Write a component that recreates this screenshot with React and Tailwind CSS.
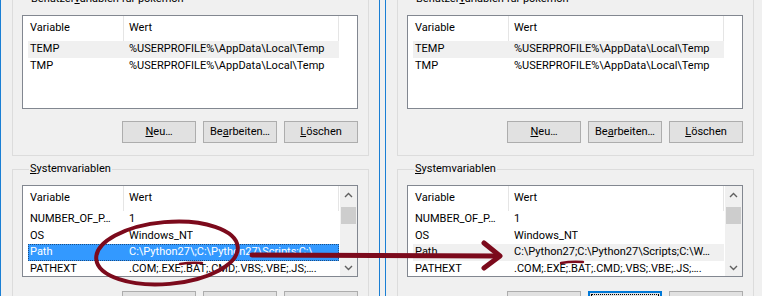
import React from "react";

const userRows = [
  { name: "TEMP", value: "%USERPROFILE%\\AppData\\Local\\Temp", shade: true },
  { name: "TMP", value: "%USERPROFILE%\\AppData\\Local\\Temp" },
];

function sysRows(variant) {
  return [
    { name: "NUMBER_OF_P…", value: "1" },
    { name: "OS", value: "Windows_NT" },
    variant === "before"
      ? { name: "Path", value: "C:\\Python27\\;C:\\Python27\\Scripts;C:\\", selected: true }
      : { name: "Path", value: "C:\\Python27;C:\\Python27\\Scripts;C:\\W…", shade: true },
    { name: "PATHEXT", value: ".COM;.EXE;.BAT;.CMD;.VBS;.VBE;.JS;…." },
  ];
}

function Header() {
  return (
    <div className="flex h-[25px] shrink-0">
      <div className="w-[101px] pl-[7px] flex items-center border-r border-[#e5e5e5]">Variable</div>
      <div className="w-[215px] pl-[5px] flex items-center border-r border-[#e5e5e5]">Wert</div>
    </div>
  );
}

function Row({ row }) {
  let cls = "ml-[5px] w-[311px] h-[17px] flex items-center whitespace-nowrap";
  if (row.selected) cls += " bg-[#3399ff] text-white outline-1 outline-dotted -outline-offset-1 outline-[#1d4f85]";
  else if (row.shade) cls += " bg-[#f0f0f0]";
  return (
    <div className={cls}>
      <div className="w-[96px] pl-[2px] shrink-0 overflow-hidden">{row.name}</div>
      <div className="pl-[5px] overflow-hidden">{row.value}</div>
    </div>
  );
}

function Chevron({ up }) {
  return (
    <svg width="9" height="6" viewBox="0 0 9 6">
      <polyline
        points={up ? "1,5 4.5,1.5 8,5" : "1,1 4.5,4.5 8,1"}
        fill="none"
        stroke="#606060"
        strokeWidth="1.4"
      />
    </svg>
  );
}

function ScrollBar() {
  return (
    <div className="w-[17px] ml-auto bg-[#f0f0f0] flex flex-col items-center">
      <div className="h-[17px] flex items-center justify-center">
        <Chevron up />
      </div>
      <div className="mt-[4px] w-[15px] h-[17px] bg-[#cdcdcd]" />
      <div className="mt-auto h-[17px] flex items-center justify-center">
        <Chevron />
      </div>
    </div>
  );
}

function Buttons({ focusEdit }) {
  return (
    <div className="flex justify-end gap-[7px]">
      <div className="w-[74px] h-[22px] flex items-center justify-center border border-[#adadad] bg-[#e1e1e1]">
        <span><span className="underline">N</span>eu…</span>
      </div>
      {focusEdit ? (
        <div className="w-[74px] h-[22px] border-2 border-[#0078d7] bg-[#e1e1e1] p-[1px]">
          <div className="h-full flex items-center justify-center border border-dotted border-[#000]">
            <span>Be<span className="underline">a</span>rbeiten…</span>
          </div>
        </div>
      ) : (
        <div className="w-[74px] h-[22px] flex items-center justify-center border border-[#adadad] bg-[#e1e1e1]">
          <span>Be<span className="underline">a</span>rbeiten…</span>
        </div>
      )}
      <div className="w-[74px] h-[22px] flex items-center justify-center border border-[#adadad] bg-[#e1e1e1]">
        <span><span className="underline">L</span>öschen</span>
      </div>
    </div>
  );
}

function EnvWindow({ variant }) {
  return (
    <div className="w-[380px] shrink-0 border-x border-[#1a7fd4] bg-[#f0f0f0] pl-[11px] pr-[10px]">
      {/* Benutzervariablen */}
      <div className="-mt-[1px] border border-[#dcdcdc] pl-[9px] pr-[10px] pb-[12px]">
        <div className="-mt-[9px] ml-[8px] w-fit px-[1px] bg-[#f0f0f0] leading-[16px]">
          Benutzer<span className="underline">v</span>ariablen für pokemon
        </div>
        <div className="mt-[8px] h-[94px] border border-[#828790] bg-white flex flex-col">
          <Header />
          {userRows.map((r) => (
            <Row key={r.name} row={r} />
          ))}
        </div>
        <div className="mt-[12px]">
          <Buttons />
        </div>
      </div>

      {/* Systemvariablen */}
      <div className="mt-[13px] border border-[#dcdcdc] pl-[9px] pr-[10px] pb-[12px]">
        <div className="-mt-[9px] ml-[7px] w-fit px-[1px] bg-[#f0f0f0] leading-[16px]">
          <span className="underline">S</span>ystemvariablen
        </div>
        <div className="mt-[8px] h-[92px] border border-[#828790] bg-white flex">
          <div className="flex flex-col w-[316px] overflow-hidden">
            <Header />
            {sysRows(variant).map((r) => (
              <Row key={r.name} row={r} />
            ))}
          </div>
          <ScrollBar />
        </div>
        <div className="mt-[14px]">
          <Buttons focusEdit={variant === "after"} />
        </div>
      </div>
    </div>
  );
}

function Annotations() {
  return (
    <svg className="absolute inset-0 pointer-events-none" width="762" height="296" viewBox="0 0 762 296">
      <g fill="none" stroke="#7c0a1c" strokeLinecap="round" strokeLinejoin="round">
        <ellipse cx="167" cy="253" rx="71" ry="31" transform="rotate(-5 167 253)" strokeWidth="4" />
        <line x1="252" y1="255" x2="497" y2="256" strokeWidth="5" />
        <polyline points="484,243 500,256 484,268" strokeWidth="5" />
        <path d="M180 264 Q191 262 202 263" strokeWidth="2.5" />
        <path d="M561 263 Q572 261 583 262" strokeWidth="2.5" />
      </g>
    </svg>
  );
}

export default function App() {
  return (
    <div
      className="relative w-[762px] h-[296px] overflow-hidden bg-[#f0f0f0] text-[11px] text-black flex gap-[5px]"
      style={{ fontFamily: 'Roboto, "Noto Sans", Arial, sans-serif' }}
    >
      <EnvWindow variant="before" />
      <EnvWindow variant="after" />
      <Annotations />
    </div>
  );
}
